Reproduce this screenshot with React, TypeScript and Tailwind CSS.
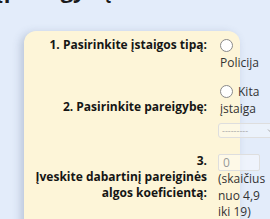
import React from "react";

function Radio({ label }: { label: string }) {
  return (
    <label className="block leading-[17px]">
      <span className="mr-[5px] inline-block h-[13px] w-[13px] translate-y-[2px] rounded-full border border-[#8a8a8a] bg-white" />
      {label}
    </label>
  );
}

export default function App() {
  return (
    <div
      className="h-[219px] w-[270px] overflow-hidden bg-[#e3ecfa] text-[#222]"
      style={{ fontFamily: '"Open Sans", "Liberation Sans", sans-serif' }}
    >
      <h1 className="-mt-[25px] -ml-[3px] text-[22px] font-bold leading-[28px] text-[#1c1c1c]">
        įpareigybę
      </h1>

      <div className="ml-[24px] mt-[28px] w-[216px] rounded-[12px] bg-[#fdf5d8] pb-[40px] pt-[6px] shadow-[-3px_2px_8px_rgba(60,80,120,0.25)]">
        <div className="grid grid-cols-[183px_50px] gap-x-[11px] text-[12px]">
          {/* eilė 1 */}
          <div className="pt-[1px] text-right font-bold leading-[14px] text-[#151515]">
            1. Pasirinkite įstaigos tipą:
          </div>
          <div className="pl-[2px] text-[#333]">
            <Radio label="Policija" />
          </div>

          {/* eilė 2 */}
          <div className="self-end pb-[3px] text-right font-bold leading-[14px] text-[#151515]">
            2. Pasirinkite pareigybę:
          </div>
          <div className="mt-[12px] pl-[2px] text-[#333]">
            <Radio label="Kita įstaiga" />
          </div>

          {/* eilė 3 */}
          <div />
          <div className="mt-[6px]">
            <div className="flex h-[15px] w-[60px] items-center justify-between rounded-[3px] border border-[#dedede] bg-white/30 pl-[3px] pr-[2px] text-[9px] leading-none text-[#aaa]">
              <span>---------</span>
              <svg width="8" height="6" viewBox="0 0 8 6" fill="none">
                <path d="M1 1.5 4 4.5 7 1.5" stroke="#aaa" strokeWidth="1" />
              </svg>
            </div>
          </div>

          {/* eilė 4 */}
          <div className="mt-[15px] text-right font-bold leading-[16px] text-[#151515]">
            3.
            <br />
            Įveskite dabartinį pareiginės
            <br />
            algos koeficientą:
          </div>
          <div className="mt-[16px] text-[#333]">
            <div className="flex h-[17px] w-[42px] items-center rounded-[2px] border border-[#dedede] bg-white/40 pl-[4px] text-[12px] text-[#999]">
              0
            </div>
            <div className="leading-[16.5px]">(skaičius nuo 4,9 iki 19)</div>
          </div>
        </div>
      </div>
    </div>
  );
}
